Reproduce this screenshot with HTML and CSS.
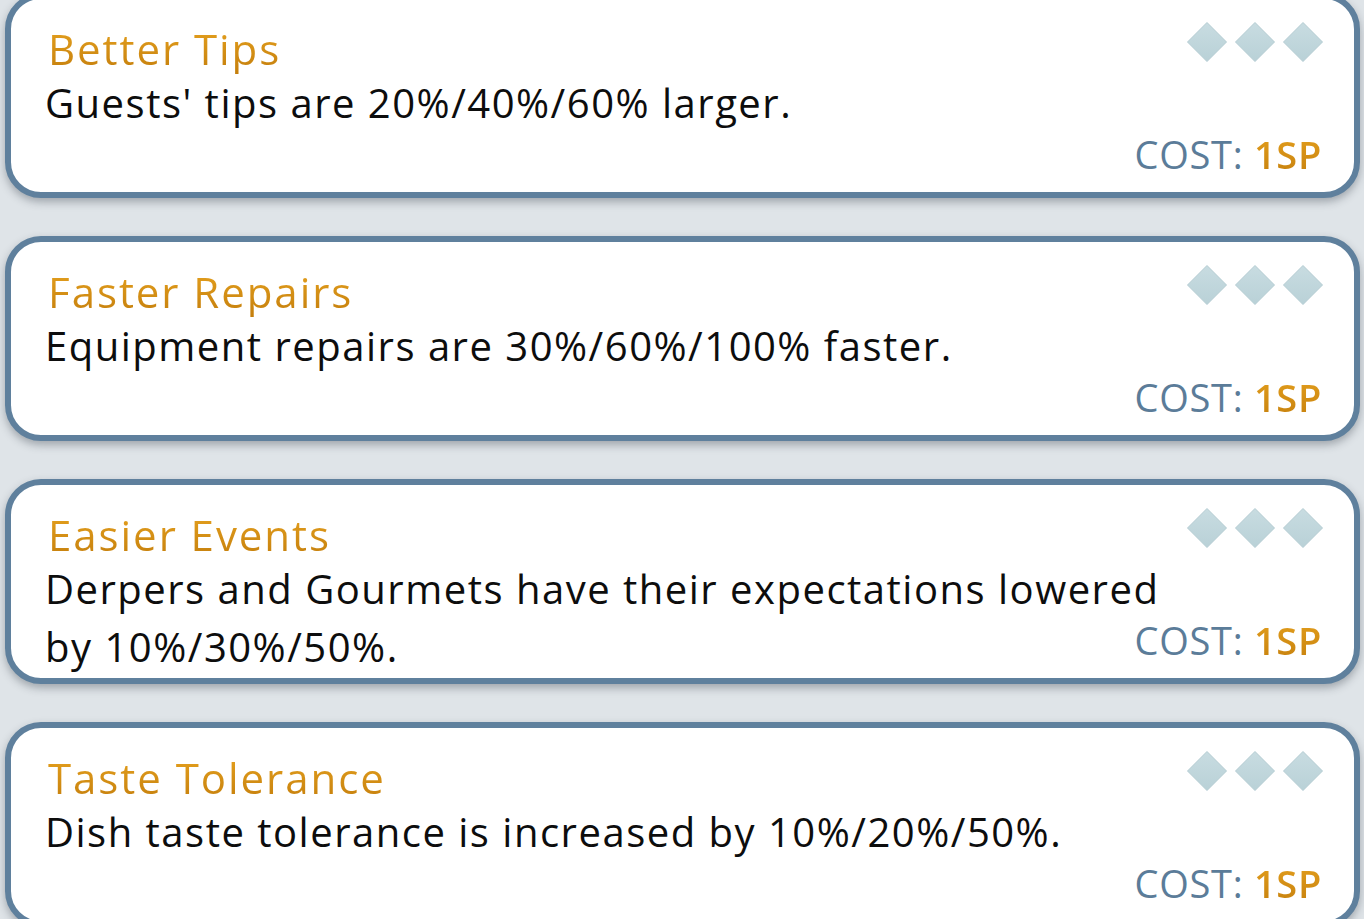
FILE: index.html
```html
<!DOCTYPE html>
<html lang="en">
<head>
<meta charset="utf-8">
<title>Perks</title>
<link rel="stylesheet" href="styles.css">
</head>
<body>
<div class="list">
  <div class="card">
    <div class="head">
      <div class="title">Better Tips</div>
      <svg class="pips" width="136" height="40" viewBox="0 0 136 40"><defs><linearGradient id="dg" x1="0" y1="0" x2="0" y2="1"><stop offset="0" stop-color="#c8dce1"/><stop offset="1" stop-color="#b9d1d7"/></linearGradient></defs><polygon points="20,0.5 39.5,20 20,39.5 0.5,20" fill="url(#dg)" stroke="#b3cbd1"/><polygon points="68,0.5 87.5,20 68,39.5 48.5,20" fill="url(#dg)" stroke="#b3cbd1"/><polygon points="116,0.5 135.5,20 116,39.5 96.5,20" fill="url(#dg)" stroke="#b3cbd1"/></svg>
    </div>
    <div class="desc">Guests' tips are 20%/40%/60% larger.</div>
    <div class="cost">COST: <span class="sp">1SP</span></div>
  </div>
  <div class="card">
    <div class="head">
      <div class="title">Faster Repairs</div>
      <svg class="pips" width="136" height="40" viewBox="0 0 136 40"><polygon points="20,0.5 39.5,20 20,39.5 0.5,20" fill="url(#dg)" stroke="#b3cbd1"/><polygon points="68,0.5 87.5,20 68,39.5 48.5,20" fill="url(#dg)" stroke="#b3cbd1"/><polygon points="116,0.5 135.5,20 116,39.5 96.5,20" fill="url(#dg)" stroke="#b3cbd1"/></svg>
    </div>
    <div class="desc">Equipment repairs are 30%/60%/100% faster.</div>
    <div class="cost">COST: <span class="sp">1SP</span></div>
  </div>
  <div class="card">
    <div class="head">
      <div class="title">Easier Events</div>
      <svg class="pips" width="136" height="40" viewBox="0 0 136 40"><polygon points="20,0.5 39.5,20 20,39.5 0.5,20" fill="url(#dg)" stroke="#b3cbd1"/><polygon points="68,0.5 87.5,20 68,39.5 48.5,20" fill="url(#dg)" stroke="#b3cbd1"/><polygon points="116,0.5 135.5,20 116,39.5 96.5,20" fill="url(#dg)" stroke="#b3cbd1"/></svg>
    </div>
    <div class="desc">Derpers and Gourmets have their expectations lowered by 10%/30%/50%.</div>
    <div class="cost">COST: <span class="sp">1SP</span></div>
  </div>
  <div class="card">
    <div class="head">
      <div class="title">Taste Tolerance</div>
      <svg class="pips" width="136" height="40" viewBox="0 0 136 40"><polygon points="20,0.5 39.5,20 20,39.5 0.5,20" fill="url(#dg)" stroke="#b3cbd1"/><polygon points="68,0.5 87.5,20 68,39.5 48.5,20" fill="url(#dg)" stroke="#b3cbd1"/><polygon points="116,0.5 135.5,20 116,39.5 96.5,20" fill="url(#dg)" stroke="#b3cbd1"/></svg>
    </div>
    <div class="desc">Dish taste tolerance is increased by 10%/20%/50%.</div>
    <div class="cost">COST: <span class="sp">1SP</span></div>
  </div>
</div>
</body>
</html>
```
FILE: styles.css
```css
html, body {
  margin: 0;
  padding: 0;
  background: #dfe4e8;
  overflow: hidden;
  height: 919px;
}
body {
  font-family: "Open Sans", "Noto Sans", sans-serif;
}
.list {
  display: flex;
  flex-direction: column;
  gap: 38px;
  margin-top: -7px;
  padding-left: 5px;
  width: 1355px;
}
.card {
  position: relative;
  box-sizing: border-box;
  height: 205px;
  background: #fff;
  border: 6px solid #5f809d;
  border-radius: 36px;
  box-shadow: 0 4px 9px rgba(40, 50, 60, 0.35);
  padding: 25px 31px 0 34px;
}
.head {
  display: flex;
  justify-content: space-between;
  align-items: flex-start;
}
.title {
  font-size: 42px;
  line-height: 50px;
  letter-spacing: 1.95px;
  margin-left: 3px;
  background: linear-gradient(#e6a21f, #c47e0c);
  -webkit-background-clip: text;
  background-clip: text;
  color: transparent;
}
.pips {
  margin-top: -2px;
  display: block;
}
.desc {
  font-size: 40px;
  line-height: 58px;
  letter-spacing: 1.5px;
  color: #0d0d0d;
  max-width: 1140px;
}
.cost {
  position: absolute;
  right: 32px;
  bottom: 16px;
  font-size: 38px;
  line-height: 44px;
  letter-spacing: 0.7px;
  color: #5b7c99;
}
.sp {
  font-weight: 600;
  background: linear-gradient(#e6a21f, #c47e0c);
  -webkit-background-clip: text;
  background-clip: text;
  color: transparent;
}
```
